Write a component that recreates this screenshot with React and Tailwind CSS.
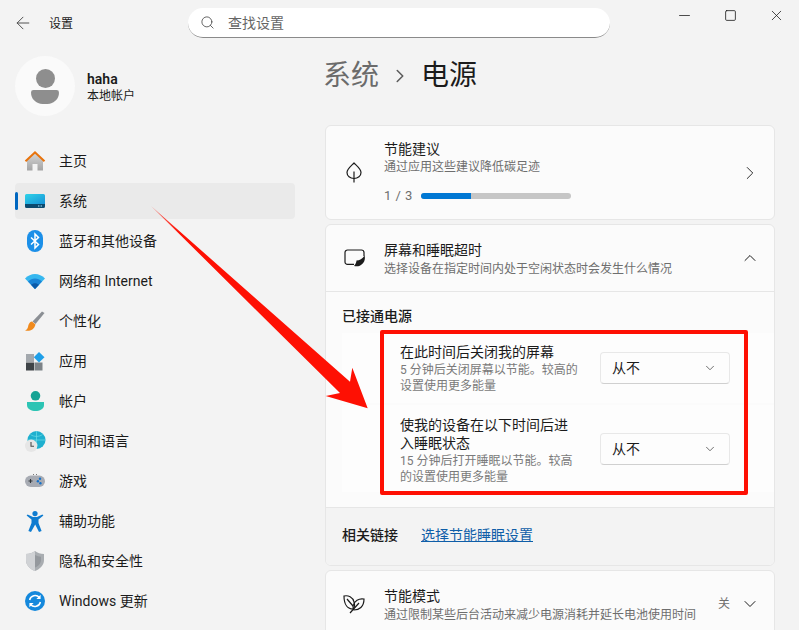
import { ArrowLeft, Search, ChevronRight, ChevronDown, ChevronUp, Minus, Square, X } from "lucide-react";

const HomeIcon = () => (
  <svg width="22" height="22" viewBox="0 0 22 22">
    <defs>
      <linearGradient id="homeBody" x1="0" y1="0" x2="0" y2="1">
        <stop offset="0" stopColor="#d6d6d6" />
        <stop offset="1" stopColor="#a4a4a4" />
      </linearGradient>
    </defs>
    <path d="M3 10 L11 3 L19 10 V20.5 H13.5 V14 H8.5 V20.5 H3 Z" fill="url(#homeBody)" />
    <path d="M0.8 10.6 L11 1 L21.2 10.6 L19.8 12 L11 3.8 L2.2 12 Z" fill="#e8730c" />
  </svg>
);

const SystemIcon = () => (
  <svg width="20" height="14" viewBox="0 0 20 14">
    <defs>
      <linearGradient id="sysTop" x1="0" y1="0" x2="1" y2="1">
        <stop offset="0" stopColor="#2fd3e8" />
        <stop offset="1" stopColor="#1793d8" />
      </linearGradient>
    </defs>
    <path d="M1.5 0 H18.5 A1.5 1.5 0 0 1 20 1.5 V10 H0 V1.5 A1.5 1.5 0 0 1 1.5 0 Z" fill="url(#sysTop)" />
    <path d="M0 10 H20 V12.5 A1.5 1.5 0 0 1 18.5 14 H1.5 A1.5 1.5 0 0 1 0 12.5 Z" fill="#0b4a6f" />
    <rect x="13" y="11.4" width="1.4" height="1.2" fill="#8fd0ea" />
    <rect x="15.6" y="11.4" width="1.4" height="1.2" fill="#8fd0ea" />
  </svg>
);

const BluetoothIcon = () => (
  <svg width="16" height="22" viewBox="0 0 16 22">
    <rect x="0" y="0" width="16" height="22" rx="8" fill="#1b8fe8" />
    <path d="M4 7.5 L11.5 14.5 L8 18 V4 L11.5 7.5 L4 14.5" fill="none" stroke="#fff" strokeWidth="1.5" />
  </svg>
);

const WifiIcon = () => (
  <svg width="20" height="15" viewBox="0 0 20 15">
    <path d="M0 4.6 C5.5 -1.5 14.5 -1.5 20 4.6 L10 15 Z" fill="#36b7ef" />
    <path d="M3 7.6 C7 3.6 13 3.6 17 7.6 L10 15 Z" fill="#1a84d6" />
    <path d="M6 10.8 C8.4 8.6 11.6 8.6 14 10.8 L10 15 Z" fill="#0c5aa8" />
  </svg>
);

const BrushIcon = () => (
  <svg width="20" height="20" viewBox="0 0 20 20">
    <path d="M17 0.5 L19.5 2 L10.5 13 L7.5 10.5 Z" fill="#8b8f94" />
    <path d="M7 10.5 C4 11 3.5 14 3 16 C2.5 18 1.5 19 0 19.5 C4 20.5 9 19.5 10.5 13.5 Z" fill="#f08a1d" />
  </svg>
);

const AppsIcon = () => (
  <svg width="19" height="19" viewBox="0 0 19 19">
    <rect x="0" y="2" width="8" height="8" fill="#a3a8ad" />
    <rect x="0" y="10.5" width="8" height="8" fill="#3e4347" />
    <rect x="8.5" y="10.5" width="8" height="8" fill="#7d8388" />
    <path d="M13 0 L18.5 5.2 L13 10.4 L7.8 5.2 Z" fill="#1f9fe8" />
  </svg>
);

const AccountIcon = () => (
  <svg width="17" height="20" viewBox="0 0 17 20">
    <circle cx="8.5" cy="4.8" r="4.8" fill="#16a394" />
    <path d="M0 11 H17 V14 C17 18 12.5 20 8.5 20 C4.5 20 0 18 0 14 Z" fill="#2cc4b4" />
  </svg>
);

const TimeIcon = () => (
  <svg width="21" height="21" viewBox="0 0 21 21">
    <circle cx="11.5" cy="9" r="9" fill="#1fb0cf" />
    <path d="M2.5 9 H20.5 M11.5 0 V18 M5.5 3.5 C8.5 6 14.5 6 17.5 3.5" fill="none" stroke="#6fdde6" strokeWidth="0.7" />
    <circle cx="6.2" cy="14.8" r="6.2" fill="#e6e6e6" />
    <path d="M6 11 V15.2 H9" fill="none" stroke="#4a4a4a" strokeWidth="1.1" />
  </svg>
);

const GameIcon = () => (
  <svg width="20" height="14" viewBox="0 0 20 14">
    <rect x="0" y="1.5" width="20" height="11.5" rx="5.7" fill="#a7abb3" />
    <path d="M3.5 7 H7.5 M5.5 5 V9" stroke="#33373b" strokeWidth="1.1" />
    <circle cx="15" cy="4.8" r="1.2" fill="#1672c9" />
    <circle cx="12.9" cy="7.2" r="1.2" fill="#1672c9" />
    <circle cx="15.4" cy="9.2" r="1.2" fill="#1672c9" />
    <rect x="8" y="0" width="1" height="1" fill="#777" />
    <rect x="11" y="0" width="1" height="1" fill="#777" />
  </svg>
);

const AccessIcon = () => (
  <svg width="18" height="21" viewBox="0 0 18 21">
    <circle cx="9" cy="2.6" r="2.6" fill="#0f7cd0" />
    <path d="M0.6 4.6 L1.6 3.4 L7 6 H11 L16.4 3.4 L17.4 4.6 L12.5 8.6 V12 L15.6 20 L13 21 L9.2 13.5 L5 21 L2.4 20 L5.5 12 V8.6 Z" fill="#0f7cd0" />
  </svg>
);

const ShieldIcon = () => (
  <svg width="18" height="20" viewBox="0 0 18 20">
    <path d="M9 0 C11.5 2 14.5 3 18 3 V9 C18 14.5 14 18 9 20 C4 18 0 14.5 0 9 V3 C3.5 3 6.5 2 9 0 Z" fill="#a9adb1" />
    <path d="M9 0 V20 C4 18 0 14.5 0 9 V3 C3.5 3 6.5 2 9 0 Z" fill="#d0d2d5" />
    <path d="M9 4 C11 5 13 5.5 15 5.7 V9 C15 12.5 12.5 15 9 16.6 Z" fill="#94989d" />
  </svg>
);

const UpdateIcon = () => (
  <svg width="20" height="20" viewBox="0 0 20 20">
    <circle cx="10" cy="10" r="10" fill="#1488dc" />
    <path d="M4.6 9 A5.6 5.6 0 0 1 14.4 6.6 M15.4 11 A5.6 5.6 0 0 1 5.6 13.4" fill="none" stroke="#fff" strokeWidth="1.5" />
    <path d="M15.6 3.8 V8 H11.4 Z M4.4 16.2 V12 H8.6 Z" fill="#fff" />
  </svg>
);

const navItems = [
  { label: "主页", icon: <HomeIcon /> },
  { label: "系统", icon: <SystemIcon />, active: true },
  { label: "蓝牙和其他设备", icon: <BluetoothIcon /> },
  { label: "网络和 Internet", icon: <WifiIcon /> },
  { label: "个性化", icon: <BrushIcon /> },
  { label: "应用", icon: <AppsIcon /> },
  { label: "帐户", icon: <AccountIcon /> },
  { label: "时间和语言", icon: <TimeIcon /> },
  { label: "游戏", icon: <GameIcon /> },
  { label: "辅助功能", icon: <AccessIcon /> },
  { label: "隐私和安全性", icon: <ShieldIcon /> },
  { label: "Windows 更新", icon: <UpdateIcon /> },
];

const NavItem = ({ label, icon, active }) => (
  <div className={`relative flex items-center h-9 rounded-[4px] ${active ? "bg-[#eaeaea]" : ""}`}>
    {active && <div className="absolute left-0 top-[9px] w-[3px] h-[18px] rounded-full bg-[#0067c0]" />}
    <div className="w-[40px] flex justify-center">{icon}</div>
    <span className="ml-1 text-sm text-[#1b1b1b]">{label}</span>
  </div>
);

const LeafIcon = () => (
  <svg width="16" height="21" viewBox="0 0 16 21" fill="none" stroke="#1b1b1b" strokeWidth="1.2">
    <path d="M8 1 C11 4 15 7 15 10.5 C15 14 12 16.5 8 16.5 C4 16.5 1 14 1 10.5 C1 7 5 4 8 1 Z" />
    <path d="M8 9.5 V20.5" />
  </svg>
);

const ScreenIcon = () => (
  <svg width="21" height="18" viewBox="0 0 21 18">
    <path d="M10 15.4 H3.5 A2.5 2.5 0 0 1 1 12.9 V3.5 A2.5 2.5 0 0 1 3.5 1 H17.5 A2.5 2.5 0 0 1 20 3.5 V7" fill="none" stroke="#1b1b1b" strokeWidth="1.2" />
    <path d="M20.5 6.5 C22.5 12.5 17 19 10 17 C11.5 15.5 12.5 13 12.5 11.5 C15.5 11.5 18.5 10 20.5 6.5 Z" fill="#1b1b1b" />
  </svg>
);

const EcoIcon = () => (
  <svg width="22" height="20" viewBox="0 0 22 20" fill="none" stroke="#1b1b1b" strokeWidth="1.2">
    <path d="M1 2 C5 1 10 3 11 8 C12 11 11 14 10 15 C5 15 1 11 1 2 Z" />
    <path d="M21 5 C16 4 11 7 10 12 C10 14 10 15 11 16 C16 16 21 13 21 5 Z" />
    <path d="M4 5 L10 12 M16 9 L7 19" />
  </svg>
);

const Select = () => (
  <div className="w-[130px] h-8 flex items-center justify-between pl-[11px] pr-3 bg-[#fdfdfd] border border-[#e8e8e8] border-b-[#d0d0d0] rounded-[4px]">
    <span className="text-sm text-[#1b1b1b]">从不</span>
    <ChevronDown size={14} strokeWidth={1.3} className="text-[#444]" />
  </div>
);

const SettingRow = ({ title, desc, padding }) => (
  <div className="flex items-center pl-[58px] bg-[#fdfdfd]">
    <div className={`w-[180px] ${padding}`}>
      <div className="text-sm leading-[18px] text-[#1b1b1b]">{title}</div>
      <div className="mt-px text-xs leading-4 text-[#7a7a7a]">{desc}</div>
    </div>
    <div className="ml-5">
      <Select />
    </div>
  </div>
);

const CardHeader = ({ icon, title, desc, right }) => (
  <div className="flex items-center h-[66px]">
    <div className="w-[58px] pr-[2px] flex justify-center">{icon}</div>
    <div className="flex-1 pt-[3px]">
      <div className="text-sm leading-[18px] text-[#1b1b1b]">{title}</div>
      <div className="mt-px text-xs leading-[18px] text-[#6e6e6e]">{desc}</div>
    </div>
    {right}
  </div>
);

export default function App() {
  return (
    <div
      className="relative w-[799px] h-[630px] overflow-hidden bg-[#f3f3f3]"
      style={{ fontFamily: 'Roboto, "Noto Sans CJK SC", sans-serif' }}
    >
      {/* title bar */}
      <div className="flex items-center h-[46px]">
        <ArrowLeft size={20} strokeWidth={1.1} className="ml-[13px] text-[#444]" />
        <span className="ml-4 pt-px text-xs text-[#1b1b1b]">设置</span>
        <div className="ml-[115px] w-[422px] h-[30px] flex items-center pl-[12px] bg-white border-b border-[#8a8a8a] rounded-[15px]">
          <Search size={15} strokeWidth={1.3} className="text-[#444]" />
          <span className="ml-[13px] text-sm text-[#666]">查找设置</span>
        </div>
        <div className="ml-auto self-start flex items-center h-[30px] text-[#1b1b1b]">
          <div className="w-[46px] flex justify-center">
            <Minus size={17} strokeWidth={1.1} />
          </div>
          <div className="w-[46px] flex justify-center">
            <Square size={13} strokeWidth={1.5} />
          </div>
          <div className="w-[46px] flex justify-center">
            <X size={17} strokeWidth={1.1} />
          </div>
        </div>
      </div>

      <div className="flex">
        {/* sidebar */}
        <aside className="w-[323px] pl-[15px] shrink-0">
          <div className="flex items-center mt-[10px]">
            <div className="w-[60px] h-[60px] rounded-full bg-[#fafafa] flex flex-col items-center justify-center">
              <div className="w-[19px] h-[19px] rounded-full bg-[#8e8e8e]" />
              <div className="w-[28px] h-[14px] mt-[2px] rounded-b-[14px] rounded-t-[3px] bg-[#8e8e8e]" />
            </div>
            <div className="ml-3 pt-[2px]">
              <div className="text-sm leading-[18px] font-semibold text-[#1b1b1b]">haha</div>
              <div className="text-xs leading-[16px] text-[#1b1b1b]">本地帐户</div>
            </div>
          </div>
          <nav className="mt-[27px] w-[280px] flex flex-col gap-1">
            {navItems.map((item) => (
              <NavItem key={item.label} {...item} />
            ))}
          </nav>
        </aside>

        {/* content */}
        <main className="flex-1 pl-[2px]">
          <div className="h-[56px] -ml-[2px] mb-[23px] pt-1 flex items-center text-[28px]">
            <span className="text-[#6b6b6b]">系统</span>
            <ChevronRight size={22} strokeWidth={1.7} className="mx-[10px] text-[#5c5c5c]" />
            <span className="text-[#1b1b1b]">电源</span>
          </div>

          <div className="w-[450px] flex flex-col gap-1">
            <div className="h-[95px] flex items-start bg-[#fbfbfb] border border-[#e6e6e6] rounded-md">
              <div className="w-[58px] pr-[2px] self-center flex justify-center">
                <LeafIcon />
              </div>
              <div className="flex-1 pt-[14px]">
                <div className="text-sm leading-[18px] text-[#1b1b1b]">节能建议</div>
                <div className="text-xs leading-[18px] text-[#6e6e6e]">通过应用这些建议降低碳足迹</div>
                <div className="flex items-center mt-[11px] h-[18px]">
                  <span className="w-[37px] text-[13px] tracking-[0.5px] text-[#6e6e6e]">1 / 3</span>
                  <div className="w-[150px] h-[6px] rounded-full bg-[#c6c6c6] overflow-hidden">
                    <div className="w-[50px] h-full bg-[#0078d4]" />
                  </div>
                </div>
              </div>
              <ChevronRight size={22} strokeWidth={1} className="self-center mr-[13px] text-[#1b1b1b]" />
            </div>

            <div className="h-[342px] flex flex-col bg-[#fbfbfb] border border-[#e6e6e6] rounded-md overflow-hidden">
              <div className="border-b border-[#e6e6e6]">
                <CardHeader
                  icon={<ScreenIcon />}
                  title="屏幕和睡眠超时"
                  desc="选择设备在指定时间内处于空闲状态时会发生什么情况"
                  right={<ChevronUp size={20} strokeWidth={1.2} className="mr-[14px] text-[#1b1b1b]" />}
                />
              </div>
              <div className="pl-[16px] pt-[15px]">
                <div className="text-sm leading-[18px] font-medium text-[#1b1b1b]">已接通电源</div>
                <div className="mt-[8px] flex flex-col gap-[2px]">
                  <SettingRow
                    padding="pt-[10px] pb-[9px]"
                    title="在此时间后关闭我的屏幕"
                    desc="5 分钟后关闭屏幕以节能。较高的设置使用更多能量"
                  />
                  <SettingRow
                    padding="pt-[11px] pb-[7px]"
                    title="使我的设备在以下时间后进入睡眠状态"
                    desc="15 分钟后打开睡眠以节能。较高的设置使用更多能量"
                  />
                </div>
              </div>
              <div className="mt-auto h-[58px] flex items-start pt-[17px] pl-[16px] bg-[#f3f3f3] border-t border-[#e6e6e6]">
                <span className="text-sm leading-5 font-medium text-[#1b1b1b]">相关链接</span>
                <span className="ml-[23px] text-sm leading-5 text-[#0f5ea8] underline">选择节能睡眠设置</span>
              </div>
            </div>

            <div className="bg-[#fbfbfb] border border-[#e6e6e6] rounded-md">
              <CardHeader
                icon={<EcoIcon />}
                title="节能模式"
                desc="通过限制某些后台活动来减少电源消耗并延长电池使用时间"
                right={
                  <div className="flex items-center mr-[14px]">
                    <span className="text-xs text-[#6e6e6e]">关</span>
                    <ChevronDown size={20} strokeWidth={1.2} className="ml-[10px] text-[#1b1b1b]" />
                  </div>
                }
              />
            </div>
          </div>
        </main>
      </div>

      {/* annotation drawn over the screenshot */}
      <div className="absolute left-[380px] top-[330px] w-[368px] h-[165px] border-4 border-[#fe1003] rounded-[2px]" />
      <svg className="absolute left-0 top-0 pointer-events-none" width="799" height="630" viewBox="0 0 799 630">
        <defs>
          <linearGradient id="arrowFade" x1="151" y1="206" x2="180" y2="232" gradientUnits="userSpaceOnUse">
            <stop offset="0" stopColor="#fe1003" stopOpacity="0.5" />
            <stop offset="1" stopColor="#fe1003" />
          </linearGradient>
        </defs>
        <polygon
          points="151,206 350,381.7 352.3,367.7 367.7,408.3 325.7,396 340,393"
          fill="url(#arrowFade)"
        />
      </svg>
    </div>
  );
}
